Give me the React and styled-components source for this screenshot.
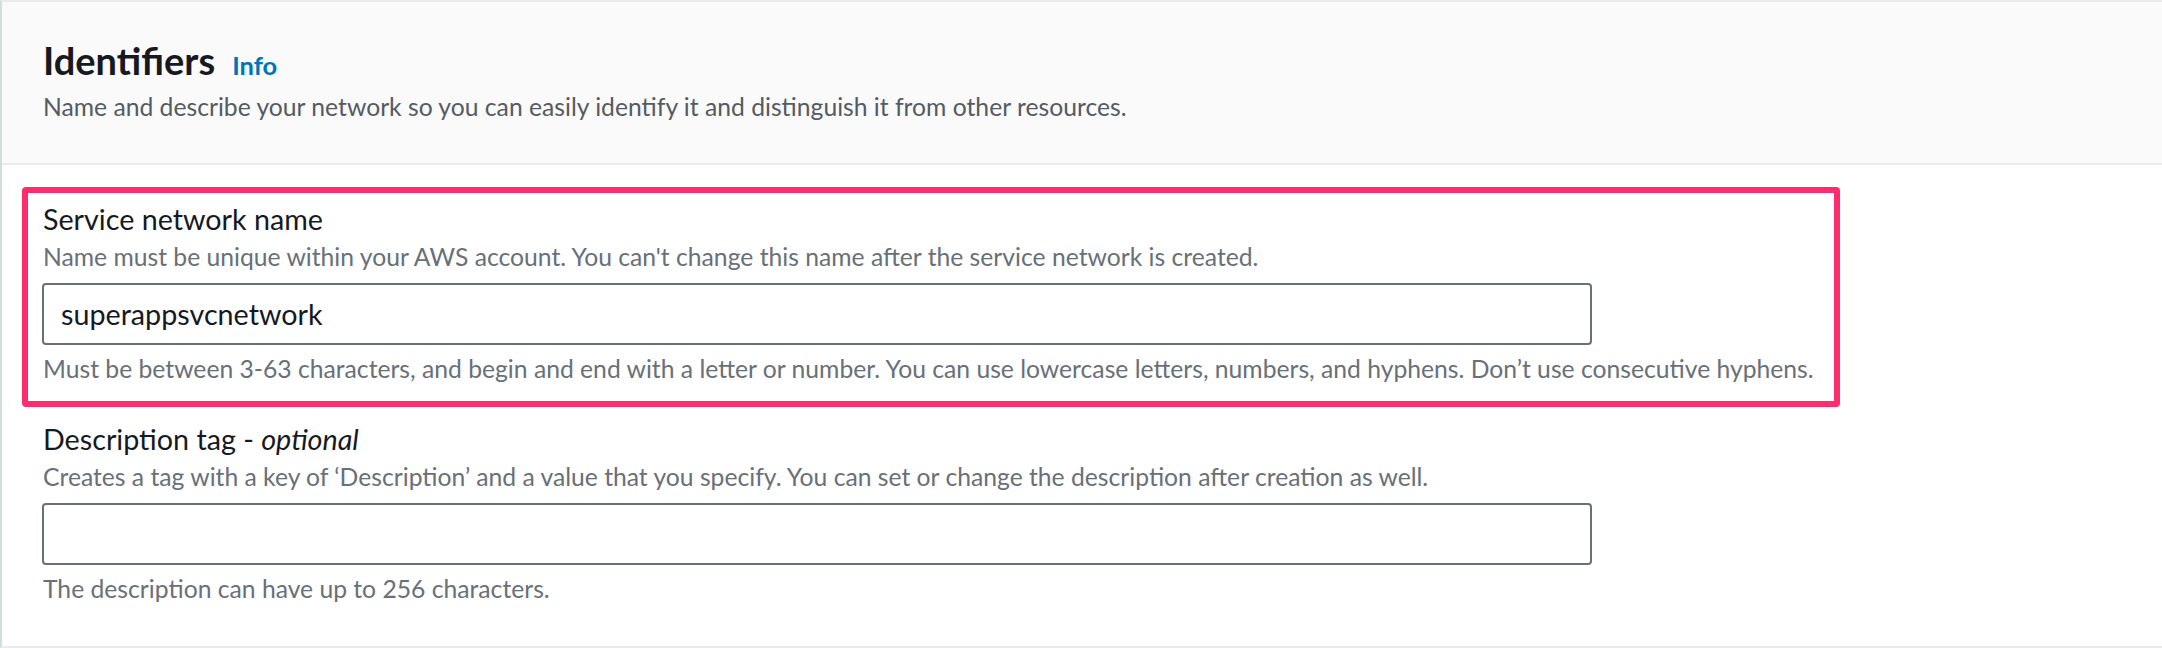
import React from "react";
import styled, { createGlobalStyle } from "styled-components";

const GlobalStyle = createGlobalStyle`
  html, body {
    margin: 0;
    padding: 0;
    background: #ffffff;
  }
  body {
    font-family: Lato, "Open Sans", sans-serif;
    -webkit-font-smoothing: antialiased;
  }
  *, *::before, *::after {
    box-sizing: border-box;
  }
`;

const Container = styled.section`
  border-top: 2px solid #e9ebed;
  border-left: 2px solid #d5dbdb;
  border-bottom: 2px solid #e9ebed;
  background: #ffffff;
`;

const Header = styled.header`
  background: #fafafa;
  border-bottom: 2px solid #e9ebed;
  padding: 35px 0 41px 41px;
`;

const TitleRow = styled.div`
  display: flex;
  align-items: baseline;
  gap: 17px;
`;

const Title = styled.h2`
  margin: 0;
  font-size: 38px;
  line-height: 46px;
  font-weight: 700;
  color: #16191f;
`;

const InfoLink = styled.a`
  font-size: 25.5px;
  line-height: 30px;
  font-weight: 700;
  color: #0073bb;
  text-decoration: none;
  cursor: pointer;
`;

const HeaderDescription = styled.p`
  margin: 9px 0 0;
  font-size: 24.7px;
  line-height: 30px;
  color: #545b64;
`;

const Content = styled.div`
  padding: 22px 0 41.6px 20px;
`;

const Highlight = styled.div`
  width: 1818px;
  border: 6px solid #ff2d6e;
  border-radius: 4px;
  padding: 8px 0 16.6px 15px;
`;

const Field = styled.div`
  display: flex;
  flex-direction: column;
  align-items: flex-start;
  padding: ${(p) => (p.$plain ? "14px 0 0 21px" : "0")};
`;

const Label = styled.label`
  font-size: 28.7px;
  line-height: 36px;
  color: #16191f;
`;

const Optional = styled.i`
  font-style: italic;
`;

const Hint = styled.p`
  margin: ${(p) => (p.$below ? "9.4px 0 0" : "5.4px 0 0")};
  font-size: 24.7px;
  line-height: 30px;
  color: #687078;
`;

const TextInput = styled.input`
  display: block;
  width: 1550px;
  height: 62px;
  margin: 10.6px 0 0 -1px;
  padding: 0 16px 0 17px;
  border: 2px solid #687078;
  border-radius: 4px;
  background: #ffffff;
  font-family: Lato, "Open Sans", sans-serif;
  font-size: 28.7px;
  color: #16191f;
  outline: none;
`;

export default function App() {
  return (
    <>
      <GlobalStyle />
      <Container>
        <Header>
          <TitleRow>
            <Title>Identifiers</Title>
            <InfoLink>Info</InfoLink>
          </TitleRow>
          <HeaderDescription>
            Name and describe your network so you can easily identify it and distinguish it from other resources.
          </HeaderDescription>
        </Header>
        <Content>
          <Highlight>
            <Field>
              <Label>Service network name</Label>
              <Hint>
                Name must be unique within your AWS account. You can't change this name after the service network is created.
              </Hint>
              <TextInput defaultValue="superappsvcnetwork" />
              <Hint $below>
                Must be between 3-63 characters, and begin and end with a letter or number. You can use lowercase letters, numbers, and hyphens. Don’t use consecutive hyphens.
              </Hint>
            </Field>
          </Highlight>
          <Field $plain>
            <Label>
              Description tag - <Optional>optional</Optional>
            </Label>
            <Hint>
              Creates a tag with a key of ‘Description’ and a value that you specify. You can set or change the description after creation as well.
            </Hint>
            <TextInput defaultValue="" />
            <Hint $below>The description can have up to 256 characters.</Hint>
          </Field>
        </Content>
      </Container>
    </>
  );
}
